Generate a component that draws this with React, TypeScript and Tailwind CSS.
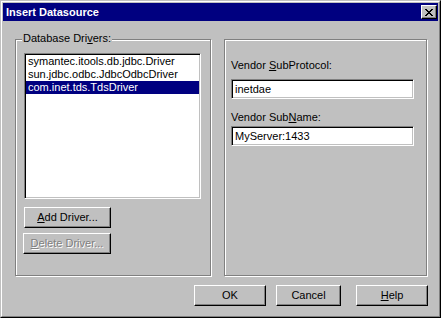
import React from "react";

function Btn({
  children,
  className = "",
  disabled = false,
}: {
  children: React.ReactNode;
  className?: string;
  disabled?: boolean;
}) {
  return (
    <div
      className={
        "h-[21px] flex items-center justify-center bg-[#c0c0c0] border border-t-white border-l-white border-r-black border-b-black shadow-[inset_-1px_-1px_0_#808080] " +
        (disabled ? "text-[#808080] [text-shadow:1px_1px_0_#fff] " : "text-black ") +
        className
      }
    >
      {children}
    </div>
  );
}

function GroupBox({
  label,
  className = "",
  children,
}: {
  label?: React.ReactNode;
  className?: string;
  children: React.ReactNode;
}) {
  return (
    <div
      className={
        "relative h-[237px] border border-[#808080] shadow-[inset_1px_1px_0_#fff,1px_1px_0_#fff] " +
        className
      }
    >
      {label && (
        <div className="absolute left-[6px] top-[-8px] px-px bg-[#c0c0c0] leading-[13px]">
          {label}
        </div>
      )}
      {children}
    </div>
  );
}

function TextField({ value }: { value: string }) {
  return (
    <div className="w-[183px] h-[20px] bg-white border border-t-[#808080] border-l-[#808080] border-r-white border-b-white shadow-[inset_1px_1px_0_#000,inset_-1px_-1px_0_#c0c0c0] flex items-center pl-[3px] leading-[13px]">
      {value}
    </div>
  );
}

export default function App() {
  const drivers = [
    "symantec.itools.db.jdbc.Driver",
    "sun.jdbc.odbc.JdbcOdbcDriver",
    "com.inet.tds.TdsDriver",
  ];

  return (
    <div className="w-[441px] h-[318px] bg-[#c0c0c0] border border-t-[#c0c0c0] border-l-[#c0c0c0] border-r-black border-b-black font-['Liberation_Sans',Arial,sans-serif] text-[11px] text-black">
      <div className="h-full border border-t-white border-l-white border-r-[#808080] border-b-[#808080] p-px flex flex-col">
        {/* Title bar */}
        <div className="h-[18px] bg-[#000080] flex items-center justify-between pl-[3px] pr-px">
          <span className="text-white font-bold leading-[13px]">Insert Datasource</span>
          <div className="w-[16px] h-[14px] bg-[#c0c0c0] border border-t-white border-l-white border-r-black border-b-black shadow-[inset_-1px_-1px_0_#808080] flex items-center justify-center">
            <svg width="8" height="7" viewBox="0 0 8 7" shapeRendering="crispEdges">
              <path
                d="M0 0h2v1H0zM6 0h2v1H6zM1 1h2v1H1zM5 1h2v1H5zM2 2h4v1H2zM3 3h2v1H3zM2 4h4v1H2zM1 5h2v1H1zM5 5h2v1H5zM0 6h2v1H0zM6 6h2v1H6z"
                fill="#000"
              />
            </svg>
          </div>
        </div>

        {/* Body */}
        <div className="flex-1 flex flex-col pl-[12px] pt-[18px]">
          <div className="flex gap-[13px]">
            <GroupBox
              className="w-[196px]"
              label={
                <>
                  Database Dri<span className="underline">v</span>ers:
                </>
              }
            >
              <div className="pl-[8px] pt-[13px] flex flex-col">
                <div className="w-[177px] h-[146px] bg-white border border-t-[#808080] border-l-[#808080] border-r-white border-b-white shadow-[inset_1px_1px_0_#000,inset_-1px_-1px_0_#c0c0c0] p-px">
                  {drivers.map((d, i) => (
                    <div
                      key={d}
                      className={
                        "h-[13px] leading-[13px] pl-[2px] whitespace-nowrap " +
                        (i === 2 ? "bg-[#000080] text-white" : "")
                      }
                    >
                      {d}
                    </div>
                  ))}
                </div>
                <Btn className="w-[87px] mt-[8px]">
                  <span>
                    <span className="underline">A</span>dd Driver...
                  </span>
                </Btn>
                <Btn className="w-[88px] mt-[5px] -ml-px" disabled>
                  <span>
                    <span className="underline">D</span>elete Driver...
                  </span>
                </Btn>
              </div>
            </GroupBox>

            <GroupBox className="w-[203px]">
              <div className="pl-[6px] pt-[19px] flex flex-col">
                <div className="leading-[13px]">
                  Vendor <span className="underline">S</span>ubProtocol:
                </div>
                <div className="mt-[7px]">
                  <TextField value="inetdae" />
                </div>
                <div className="leading-[13px] mt-[12px]">
                  Vendor Sub<span className="underline">N</span>ame:
                </div>
                <div className="mt-[2px]">
                  <TextField value="MyServer:1433" />
                </div>
              </div>
            </GroupBox>
          </div>

          {/* Bottom buttons */}
          <div className="flex justify-end pr-[10px] mt-[9px]">
            <Btn className="w-[72px]">OK</Btn>
            <Btn className="w-[65px] ml-[10px]">Cancel</Btn>
            <Btn className="w-[72px] ml-[15px]">
              <span>
                <span className="underline">H</span>elp
              </span>
            </Btn>
          </div>
        </div>
      </div>
    </div>
  );
}
